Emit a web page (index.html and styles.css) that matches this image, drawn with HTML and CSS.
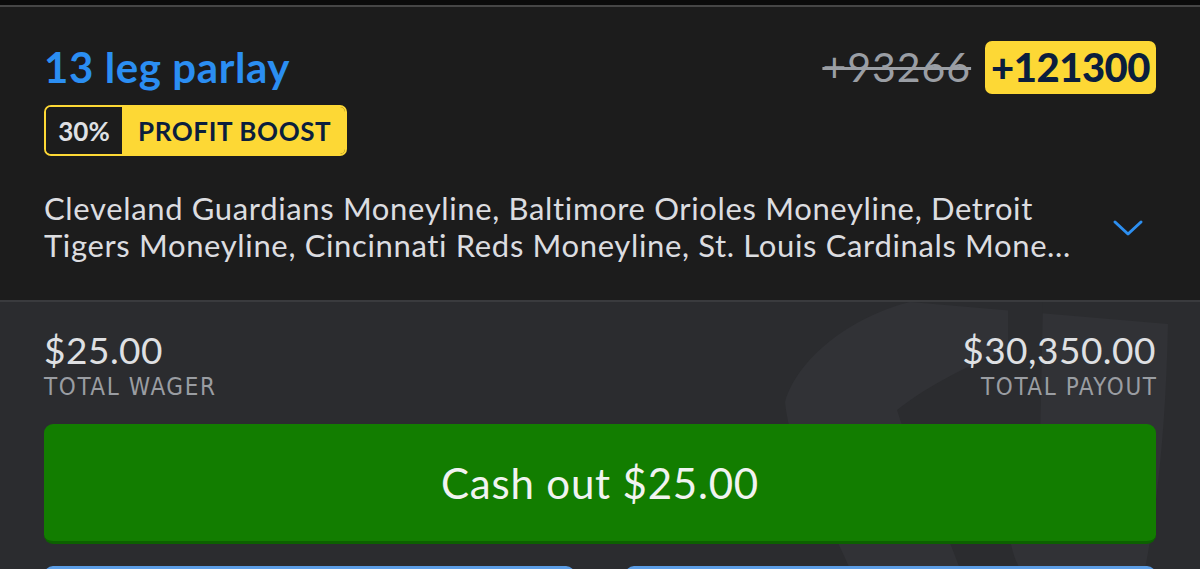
FILE: index.html
```html
<!DOCTYPE html>
<html>
<head>
<meta charset="utf-8">
<link rel="stylesheet" href="styles.css">
</head>
<body>
<div class="topstrip"></div>
<section class="card">
  <div class="head">
    <div class="head-row">
      <h1 class="title">13 leg parlay</h1>
      <div class="odds">
        <span class="old-odds">+93266</span>
        <span class="new-odds">+121300</span>
      </div>
    </div>
    <div class="boost">
      <span class="boost-pct">30%</span>
      <span class="boost-label">PROFIT BOOST</span>
    </div>
    <div class="legs-row">
      <p class="legs">
        <span class="legs-line">Cleveland Guardians Moneyline, Baltimore Orioles Moneyline, Detroit</span>
        <span class="legs-line">Tigers Moneyline, Cincinnati Reds Moneyline, St. Louis Cardinals Moneyline, Houston Astros Moneyline</span>
      </p>
      <svg class="chevron" width="32" height="20" viewBox="0 0 32 20"><path d="M3 4 L16 16 L29 4" fill="none" stroke="#2d8ff0" stroke-width="3" stroke-linecap="round" stroke-linejoin="round"/></svg>
    </div>
  </div>
  <div class="foot">
    <svg class="watermark" width="1200" height="267" viewBox="0 0 1200 267">
      <path d="M785 100 C 800 50, 860 12, 910 0 L 1168 22 C 1166 120, 1158 200, 1145 267 L 850 267 C 820 200, 790 150, 785 100 Z" fill="#313236"/>
      <path d="M897 108 C 930 82, 975 60, 1008 48 L 1008 0 L 1043 0 L 1040 140 C 1010 190, 1000 230, 1020 267 L 960 267 C 935 200, 910 150, 897 108 Z" fill="#2b2c2f"/>
    </svg>
    <div class="totals">
      <div class="total">
        <div class="amount">$25.00</div>
        <div class="label">TOTAL WAGER</div>
      </div>
      <div class="total right">
        <div class="amount">$30,350.00</div>
        <div class="label">TOTAL PAYOUT</div>
      </div>
    </div>
    <button class="cashout">Cash out $25.00</button>
    <div class="actions">
      <button class="outline"></button>
      <button class="outline"></button>
    </div>
  </div>
</section>
</body>
</html>
```
FILE: styles.css
```css
* { box-sizing: border-box; }
html, body { margin: 0; padding: 0; }
body {
  background: #0a0a0a;
  font-family: Lato, "Open Sans", sans-serif;
  width: 1200px;
  height: 569px;
  overflow: hidden;
}
.topstrip { height: 5px; background: #0b0b0b; }
.card {
  border-top: 2px solid #464646;
}
.head {
  background: #1c1c1c;
  padding: 33px 44px 0 44px;
  height: 295px;
  border-bottom: 2px solid #3a3b3e;
}
.head-row {
  display: flex;
  justify-content: space-between;
  align-items: center;
  height: 54px;
}
.title {
  margin: 0;
  font-size: 42px;
  font-weight: 700;
  letter-spacing: 0.6px;
  color: #2b8ef2;
  line-height: 48px;
}
.odds { display: flex; align-items: center; gap: 14px; }
.old-odds {
  font-size: 41px;
  letter-spacing: 1px;
  color: #9a9ea4;
  text-decoration: line-through;
  text-decoration-thickness: 3px;
  line-height: 48px;
}
.new-odds {
  background: #fdd835;
  color: #0b1e3d;
  font-weight: 900;
  font-size: 40px;
  line-height: 53px;
  padding: 0 6px;
  border-radius: 7px;
  letter-spacing: -0.5px;
}
.boost {
  display: inline-flex;
  margin-top: 11px;
  height: 51px;
  border: 2px solid #fdd835;
  border-radius: 7px;
  overflow: hidden;
  font-weight: 700;
  font-size: 26px;
}
.boost-pct {
  background: #1c1c1c;
  color: #dfe0e3;
  width: 76px;
  display: flex; align-items: center; justify-content: center;
}
.boost-label {
  background: #fdd835;
  color: #0b1e3d;
  display: flex; align-items: center;
  padding: 0 14px 0 16px;
  letter-spacing: 0.6px;
}
.legs-row {
  display: flex;
  align-items: center;
  justify-content: space-between;
  margin-top: 34px;
}
.legs {
  margin: 0;
  width: 1040px;
  font-size: 31px;
  letter-spacing: 0.65px;
  line-height: 37px;
  color: #dcdde0;
}
.legs-line {
  display: block;
  white-space: nowrap;
  overflow: hidden;
  text-overflow: ellipsis;
}
.chevron { margin-right: 12px; margin-top: 2px; }
.foot {
  position: relative;
  background: #2b2c2f;
  height: 267px;
  padding: 27px 44px 0 44px;
  overflow: hidden;
}
.watermark { position: absolute; left: 0; top: 0; }
.totals {
  position: relative;
  display: flex;
  justify-content: space-between;
}
.total.right { text-align: right; }
.amount {
  font-size: 37px;
  letter-spacing: 0.5px;
  color: #dfe0e3;
  line-height: 42px;
}
.label {
  font-family: "DejaVu Sans Condensed", "Liberation Sans Narrow", Roboto, sans-serif;
  font-size: 24px;
  letter-spacing: 1.6px;
  color: #9a9da2;
  line-height: 28px;
  margin-top: 2px;
}
.total.right .label { margin-right: -1.6px; }
.cashout {
  position: relative;
  display: block;
  width: 100%;
  height: 120px;
  margin-top: 23px;
  border: none;
  border-bottom: 3px solid #0c6100;
  border-radius: 9px;
  background: #127d00;
  color: #f1f3f1;
  font-family: Lato, "Open Sans", sans-serif;
  font-size: 42px;
  letter-spacing: 0.8px;
}
.actions {
  position: relative;
  display: flex;
  gap: 50px;
  margin-top: 22px;
}
.outline {
  flex: 1;
  height: 60px;
  border: 3px solid #5c9ee6;
  border-radius: 9px;
  background: transparent;
}
```
